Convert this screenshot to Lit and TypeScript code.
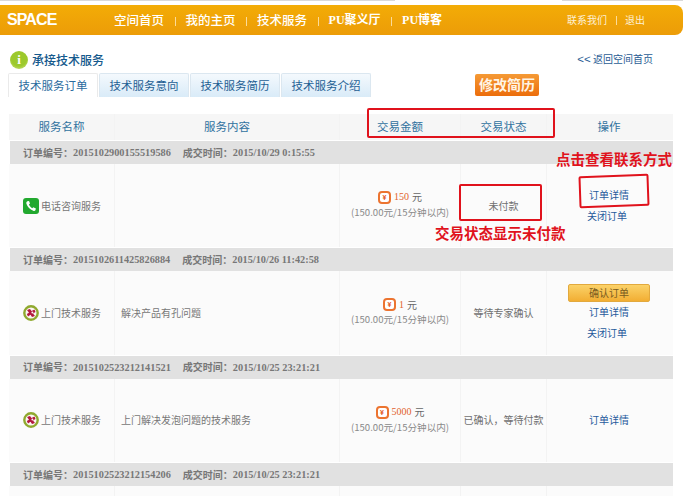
import { LitElement, html, css } from "lit";
import { customElement } from "lit/decorators.js";

const phoneIcon = html`<svg class="svc-icon" viewBox="0 0 16 16" width="16" height="16">
  <rect width="16" height="16" rx="3" fill="#22a92f"/>
  <path d="M4.3 3.2 6 2.9 7 5.6 5.9 6.5C6.5 8 7.7 9.3 9.3 10.2L10.3 9.2 12.9 10.4 12.4 12.2C12.1 13 11.2 13.2 10.2 12.8 7 11.6 4.5 9 3.4 5.8 3.1 4.6 3.5 3.6 4.3 3.2Z" fill="#fff"/>
</svg>`;

const visitIcon = html`<svg class="svc-icon" viewBox="0 0 16 16" width="16" height="16">
  <circle cx="8" cy="8" r="6.7" fill="#fbf6f2" stroke="#8fa92e" stroke-width="2.4"/>
  <path d="M4 5 7 4 8.5 6 11.5 4.5 12.5 7 10 8.5 12 11 9 12 7.5 9.8 5 11.5 3.8 9 6 7.8Z" fill="#b2183d"/>
  <circle cx="9.4" cy="7.6" r="1" fill="#fbf6f2"/>
</svg>`;

interface Order {
  no: string;
  time: string;
  icon: unknown;
  service: string;
  content: string;
  price: string;
  status: string;
  confirm?: boolean;
  close?: boolean;
}

const orders: Order[] = [
  { no: "2015102900155519586", time: "2015/10/29 0:15:55", icon: phoneIcon, service: "电话咨询服务", content: "", price: "150", status: "未付款", close: true },
  { no: "2015102611425826884", time: "2015/10/26 11:42:58", icon: visitIcon, service: "上门技术服务", content: "解决产品有孔问题", price: "1", status: "等待专家确认", confirm: true, close: true },
  { no: "2015102523212141521", time: "2015/10/25 23:21:21", icon: visitIcon, service: "上门技术服务", content: "上门解决发泡问题的技术服务", price: "5000", status: "已确认，等待付款" },
  { no: "2015102523212154206", time: "2015/10/25 23:21:21", icon: visitIcon, service: "", content: "", price: "", status: "" },
];

@customElement("app-root")
export class AppRoot extends LitElement {
  static styles = css`
    :host {
      display: block;
      width: 693px;
      height: 496px;
      overflow: hidden;
      position: relative;
      background: #fff;
      font-family: "Noto Sans CJK SC", "Liberation Sans", sans-serif;
      color: #666;
    }
    .topline { display: flex; height: 1px; margin-bottom: 4px; }
    .topline i { display: block; background: #d9d9d9; }
    .topline .a { width: 395px; }
    .topline .gap { width: 167px; background: none; }
    .topline .b { width: 121px; }
    .nav {
      width: 683px;
      height: 30px;
      box-sizing: border-box;
      display: flex;
      align-items: center;
      color: #fff;
      background: linear-gradient(#f3ac06, #ec9c08);
      border-radius: 0 8px 8px 0;
      padding: 0 38px 0 7px;
    }
    .logo {
      font: bold 16px "Liberation Sans", sans-serif;
      letter-spacing: -0.9px;
      width: 107px;
      flex: none;
    }
    .menu { display: flex; align-items: center; font-size: 12.5px; font-weight: 500; flex: 1; line-height: 1; }
    .menu .sep { width: 1px; height: 9px; background: #fbdb9a; margin: 2px 10px 0 10.5px; }
    .menu .pu { font-family: "Liberation Serif", "Noto Sans CJK SC", serif; font-weight: bold; font-size: 12px; }
    .util { display: flex; align-items: center; font-size: 10px; line-height: 1; color: #fdf0d5; }
    .util .sep { width: 1px; height: 9px; background: #fbdb9a; margin: 0 8px 0 9px; }
    .head {
      display: flex;
      align-items: center;
      height: 20px;
      margin-top: 15px;
      padding: 0 40px 0 10px;
    }
    .info {
      width: 18px; height: 18px; border-radius: 50%;
      background: radial-gradient(circle at 50% 40%, #9cc92c 55%, #d7e88f 100%);
      color: #fff;
      font: bold 13px/18px "Liberation Serif", serif;
      text-align: center;
      margin-right: 4px;
      flex: none;
    }
    .title { font-size: 12px; font-weight: 500; color: #14598c; line-height: 1; flex: 1; }
    .back { font-size: 10px; color: #2a5c94; line-height: 1; }
    .back span { font-size: 11.5px; font-family: "Liberation Sans", sans-serif; }
    .tabs-row { display: flex; align-items: flex-start; padding-left: 8px; margin-top: 3px; height: 41px; }
    .tab {
      box-sizing: border-box;
      width: 90px;
      height: 24px;
      margin-right: 1px;
      font-size: 11.5px;
      line-height: 22px;
      text-align: center;
      color: #1e5f94;
      border: 1px solid #dbe7f0;
      border-bottom: 0;
      border-radius: 2px 2px 0 0;
      background: linear-gradient(#f4f9fd, #d9ebf8);
    }
    .tab.on { background: #fff; border-color: #eaeaea; color: #2a6b9e; }
    .edit {
      box-sizing: border-box;
      width: 64px;
      height: 22px;
      margin: 1px 0 0 103px;
      border-radius: 2px;
      background: linear-gradient(#f59a35, #ec6d0b);
      color: #fff5e5;
      font-size: 14px;
      font-weight: 700;
      line-height: 21px;
      text-align: center;
    }
    .table { width: 664px; margin-left: 9px; position: relative; }
    .row {
      display: grid;
      grid-template-columns: 106px 225px 121px 86px 126px;
      background: #f3f3f3;
    }
    .row > div { background: #fbfbfb; margin-right: 1px; }
    .row > div:last-child { margin-right: 0; }
    .thead { height: 26px; }
    .thead > div {
      background: #f6f6f6;
      color: #31729f;
      font-size: 11.5px;
      line-height: 25px;
      text-align: center;
    }
    .thead > div:last-child { padding-right: 2px; }
    .bar {
      margin: 1px 0 0 1px;
      height: 23px;
      background: #e1e1e1;
      display: flex;
      align-items: center;
      padding-left: 13px;
      font-size: 10px;
      font-weight: 700;
      color: #777;
      line-height: 1;
    }
    .bar b { font: bold 10.3px "Liberation Serif", serif; color: #777; }
    .bar .no { margin-right: 12px; }
    .body { height: 83.4px; }
    .body > div {
      display: flex;
      align-items: center;
      font-size: 10px;
      line-height: 1;
      color: #777;
    }
    .body .svc { padding-left: 14px; gap: 2px; }
    .svc-icon { flex: none; }
    .body .text { padding-left: 6px; }
    .body .money { flex-direction: column; justify-content: center; gap: 4px; padding-bottom: 3px; }
    .price { display: flex; align-items: center; gap: 3px; color: #666; }
    .yen {
      box-sizing: border-box;
      width: 13px; height: 13px;
      border: 2px solid #ec7430;
      border-radius: 4px;
      color: #e2551c;
      background: #fff;
      font: bold 7px/9px "Liberation Sans", sans-serif;
      text-align: center;
    }
    .num { color: #e2622c; font-family: "Liberation Serif", serif; font-size: 10px; }
    .sub { font-size: 9.6px; color: #8a8a8a; white-space: nowrap; }
    .body .status { justify-content: center; white-space: nowrap; color: #707070; }
    .body .ops { flex-direction: column; justify-content: center; gap: 11px; color: #1f5a9c; padding-right: 2px; }
    .ops .far { margin-left: -4px; }
    .btn {
      box-sizing: border-box;
      width: 82px;
      height: 18px;
      margin: -5px 0 -6px;
      border: 1px solid #e2a93e;
      border-radius: 2px;
      background: linear-gradient(#fbd269, #f2ae33);
      color: #7a5c20;
      text-align: center;
      line-height: 16px;
    }
    .mark { position: absolute; box-sizing: border-box; border: 2px solid #e0121c; border-radius: 2px; pointer-events: none; }
    .m1 { left: 358px; top: -6px; width: 188px; height: 30px; }
    .m2 { left: 450px; top: 70px; width: 83px; height: 37px; }
    .m3 { left: 570px; top: 61px; width: 70px; height: 32px; transform: rotate(-2deg); }
    .note {
      position: absolute;
      color: #e0121c;
      font-size: 14.5px;
      font-weight: 700;
      line-height: 1;
      white-space: nowrap;
    }
    .n1 { left: 547px; top: 38px; }
    .n2 { left: 426px; top: 112px; }
  `;

  private renderOrder(o: Order) {
    return html`
      <div class="bar">
        <span>订单编号：</span><b class="no">${o.no}</b>
        <span>成交时间：</span><b>${o.time}</b>
      </div>
      <div class="row body">
        <div class="svc">${o.service ? o.icon : ""}<span>${o.service}</span></div>
        <div class="text">${o.content}</div>
        <div class="money">
          ${o.price
            ? html`<div class="price"><span class="yen">¥</span><span class="num">${o.price}</span><span>元</span></div>
                <div class="sub">(150.00元/15分钟以内)</div>`
            : ""}
        </div>
        <div class="status">${o.status}</div>
        <div class="ops">
          ${o.confirm ? html`<div class="btn">确认订单</div>` : ""}
          ${o.price ? html`<div>订单详情</div>` : ""}
          ${o.close ? html`<div class="far">关闭订单</div>` : ""}
        </div>
      </div>
    `;
  }

  render() {
    return html`
      <div class="topline"><i class="a"></i><i class="gap"></i><i class="b"></i></div>
      <div class="nav">
        <div class="logo">SPACE</div>
        <div class="menu">
          <span>空间首页</span><i class="sep"></i>
          <span>我的主页</span><i class="sep"></i>
          <span>技术服务</span><i class="sep"></i>
          <span class="pu">PU聚义厅</span><i class="sep"></i>
          <span class="pu">PU博客</span>
        </div>
        <div class="util"><span>联系我们</span><i class="sep"></i><span>退出</span></div>
      </div>
      <div class="head">
        <div class="info">i</div>
        <div class="title">承接技术服务</div>
        <div class="back"><span>&lt;&lt;</span> 返回空间首页</div>
      </div>
      <div class="tabs-row">
        <div class="tab on">技术服务订单</div>
        <div class="tab">技术服务意向</div>
        <div class="tab">技术服务简历</div>
        <div class="tab">技术服务介绍</div>
        <div class="edit">修改简历</div>
      </div>
      <div class="table">
        <div class="row thead">
          <div>服务名称</div><div>服务内容</div><div>交易金额</div><div>交易状态</div><div>操作</div>
        </div>
        ${orders.map((o) => this.renderOrder(o))}
        <div class="mark m1"></div>
        <div class="mark m2"></div>
        <div class="mark m3"></div>
        <div class="note n1">点击查看联系方式</div>
        <div class="note n2">交易状态显示未付款</div>
      </div>
    `;
  }
}
